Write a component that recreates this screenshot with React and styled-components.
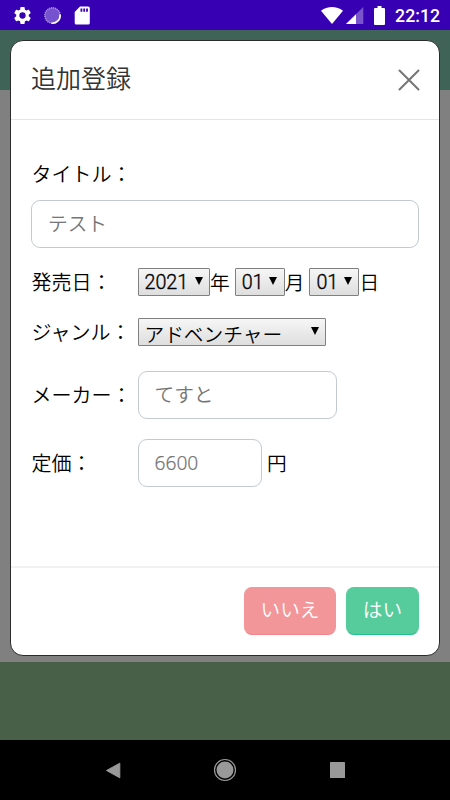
import React from "react";
import styled, { createGlobalStyle } from "styled-components";

const GlobalStyle = createGlobalStyle`
  * {
    box-sizing: border-box;
  }

  body {
    margin: 0;
    font-family: "Noto Sans CJK JP", sans-serif;
    font-weight: 350;
    font-size: 19.7px;
    color: #000;
  }

  input,
  select,
  button {
    margin: 0;
    font-family: inherit;
    font-weight: inherit;
    font-size: inherit;
  }
`;

const Screen = styled.div`
  position: relative;
  display: flex;
  flex-direction: column;
  width: 450px;
  height: 800px;
  overflow: hidden;
  background-color: #808080;
`;

const StatusBar = styled.div`
  display: flex;
  align-items: center;
  justify-content: space-between;
  height: 30px;
  padding: 0 10px 0 12px;
  background-color: #3700b3;
`;

const StatusGroup = styled.div`
  display: flex;
  align-items: center;
`;

const StatusIcon = styled.svg`
  display: block;
  width: ${(props) => props.$w}px;
  height: ${(props) => props.$h}px;
  margin-right: ${(props) => props.$gap || 0}px;
`;

const Clock = styled.span`
  padding-top: 2px;
  font-family: Roboto, sans-serif;
  font-weight: 500;
  font-size: 17.7px;
  line-height: 28px;
  color: #fff;
`;

const PageHeader = styled.div`
  height: 60px;
  background-color: #3f6457;
`;

const PageBody = styled.div`
  flex: 1;
`;

const PageFooter = styled.div`
  height: 78px;
  background-color: #486048;
`;

const NavBar = styled.div`
  display: grid;
  grid-template-columns: repeat(3, 112.5px);
  justify-content: center;
  align-items: center;
  justify-items: center;
  height: 60px;
  background-color: #000;
`;

const Modal = styled.div`
  position: absolute;
  top: 40px;
  left: 10px;
  display: flex;
  flex-direction: column;
  width: 430px;
  height: 616px;
  border: 1px solid #2b2b2b;
  border-radius: 13px;
  background-color: #fff;
`;

const ModalHeader = styled.div`
  display: flex;
  justify-content: space-between;
  align-items: center;
  height: 79px;
  padding: 0 19px 0 20px;
  border-bottom: 1px solid #e6e6e6;
`;

const Title = styled.h5`
  margin: 0;
  padding-bottom: 6px;
  font-weight: 350;
  font-size: 25px;
  line-height: 36px;
  color: #333;
`;

const Close = styled.button`
  display: flex;
  padding: 0;
  border: none;
  background: transparent;
`;

const ModalBody = styled.div`
  flex: 1;
  padding: 36px 20px 0;
`;

const ModalFooter = styled.div`
  display: flex;
  justify-content: flex-end;
  gap: 10px;
  height: 89px;
  padding: 19px 20px 0;
  border-top: 2px solid #f1f1f1;
`;

const Row = styled.div`
  display: flex;
  align-items: center;
  height: ${(props) => props.$h}px;
  margin-top: ${(props) => props.$mt || 0}px;
`;

const Label = styled.label`
  flex: none;
  width: 106.5px;
  padding: 0 0 1px 0.5px;
  font-size: 20px;
  line-height: 29px;
  white-space: nowrap;
`;

const Unit = styled.span`
  line-height: 30px;
  margin: 0 ${(props) => props.$mr || 0}px 0 ${(props) => props.$ml || 0}px;
`;

const Input = styled.input`
  width: ${(props) => props.$w};
  height: 48px;
  padding: 0 16px 1px;
  border: 1px solid #c3cad2;
  border-radius: 9px;
  background-color: #fff;
  font-family: "Noto Sans", "Noto Sans CJK JP", sans-serif;
  outline: none;

  &::placeholder {
    color: #757575;
    opacity: 1;
  }
`;

const PriceInput = styled(Input)`
  padding-bottom: 2px;
  font-size: 19.2px;
  -webkit-text-stroke: 0.2px #757575;
`;

const SelectBox = styled.div`
  position: relative;
  flex: none;
  width: ${(props) => props.$w}px;
  height: 28px;
`;

const SelectField = styled.select`
  display: block;
  appearance: none;
  width: 100%;
  height: 28px;
  padding: ${(props) => (props.$kana ? "8px 0 0 6px" : "2px 0 0 6px")};
  border: 1px solid #808080;
  border-radius: 1px;
  background: linear-gradient(#f6f6f6, #dedede);
  font-family: Roboto, "Noto Sans CJK JP", sans-serif;
  font-weight: 350;
  line-height: ${(props) => (props.$kana ? 18 : 24)}px;
  color: #000;
  -webkit-text-stroke: ${(props) => (props.$kana ? 0 : 0.35)}px #000;
`;

const Arrow = styled.svg`
  position: absolute;
  top: 9px;
  right: 7.5px;
  width: 8px;
  height: 8px;
  pointer-events: none;
`;

const Btn = styled.button`
  width: ${(props) => props.$w}px;
  height: 48px;
  padding: 0 0 6px;
  border: 1px solid ${(props) => props.$bg};
  border-bottom-color: ${(props) => props.$edge};
  border-radius: 8px;
  background-color: ${(props) => props.$bg};
  color: #fff;
`;

const Select = ({ width, value, kana }) => (
  <SelectBox $w={width}>
    <SelectField $kana={kana} defaultValue={value}>
      <option>{value}</option>
    </SelectField>
    <Arrow viewBox="0 0 8 8">
      <path d="M0 0h8L4 8z" />
    </Arrow>
  </SelectBox>
);

const SystemBar = () => (
  <StatusBar>
    <StatusGroup>
      <StatusIcon $w={21} $h={21} $gap={10} viewBox="0 0 24 24" fill="#fff">
        <path d="M19.14 12.94c.04-.3.06-.61.06-.94s-.02-.64-.07-.94l2.03-1.58a.49.49 0 0 0 .12-.61l-1.92-3.32a.49.49 0 0 0-.59-.22l-2.39.96a7 7 0 0 0-1.62-.94l-.36-2.54A.48.48 0 0 0 13.92 2.4h-3.84a.47.47 0 0 0-.47.41l-.36 2.54c-.59.24-1.13.57-1.62.94l-2.39-.96a.48.48 0 0 0-.59.22L2.74 8.87a.47.47 0 0 0 .12.61l2.03 1.58c-.05.3-.09.63-.09.94s.02.64.07.94l-2.03 1.58a.49.49 0 0 0-.12.61l1.92 3.32c.12.22.37.29.59.22l2.39-.96c.5.38 1.03.7 1.62.94l.36 2.54c.05.24.24.41.48.41h3.84c.24 0 .44-.17.47-.41l.36-2.54c.59-.24 1.13-.56 1.62-.94l2.39.96c.22.08.47 0 .59-.22l1.92-3.32a.47.47 0 0 0-.12-.61zM12 15.6a3.6 3.6 0 1 1 0-7.2 3.6 3.6 0 0 1 0 7.2z" />
      </StatusIcon>
      <StatusIcon $w={19} $h={19} $gap={12} viewBox="0 0 19 19" fill="none">
        <circle cx="9.5" cy="9.5" r="8" fill="#7652ce" />
        <circle
          cx="9.5"
          cy="9.5"
          r="7.6"
          stroke="#a58cdf"
          strokeWidth="1.6"
          strokeDasharray="1.2 0.8"
        />
        <path
          d="M17.1 8.5A7.8 7.8 0 0 1 8.5 17.2"
          stroke="#fff"
          strokeWidth="1.6"
        />
      </StatusIcon>
      <StatusIcon $w={16} $h={19} viewBox="0 0 16 19">
        <path
          d="M6 .5h8.2A1.6 1.6 0 0 1 15.8 2v15a1.6 1.6 0 0 1-1.6 1.6H2.3A1.6 1.6 0 0 1 .7 17V6z"
          fill="#fff"
        />
        <path
          d="M6.5 2.5h1.8v3.3H6.5zM9.3 2.5h1.8v3.3H9.3zM12.1 2.5h1.8v3.3h-1.8z"
          fill="#3700b3"
        />
      </StatusIcon>
    </StatusGroup>
    <StatusGroup>
      <StatusIcon $w={22} $h={17} $gap={3} viewBox="0 0 22 17">
        <path d="M0 3.7C6.5-1.1 15.5-1.1 22 3.7L11 17z" fill="#fff" />
      </StatusIcon>
      <StatusIcon $w={18} $h={17} $gap={10} viewBox="0 0 18 17">
        <path d="M17.3 0v17H0z" fill="#7a54cd" />
        <path d="M10 7.2V17H0z" fill="#fff" />
      </StatusIcon>
      <StatusIcon $w={11} $h={19} $gap={10} viewBox="0 0 11 19">
        <path
          d="M3.5 0h4v1.9H10a1 1 0 0 1 1 1V18a1 1 0 0 1-1 1H1a1 1 0 0 1-1-1V2.9a1 1 0 0 1 1-1h2.5z"
          fill="#fff"
        />
      </StatusIcon>
      <Clock>22:12</Clock>
    </StatusGroup>
  </StatusBar>
);

const Navigation = () => (
  <NavBar>
    <StatusIcon $w={16} $h={17} viewBox="0 0 16 17">
      <path
        d="M14.8 1.2v14.6L1.5 8.5z"
        fill="#999"
        stroke="#999"
        strokeLinejoin="round"
      />
    </StatusIcon>
    <StatusIcon $w={24} $h={24} viewBox="0 0 24 24" fill="none">
      <circle cx="12" cy="12" r="10.5" stroke="#999" strokeWidth="1.2" />
      <circle cx="12" cy="12" r="8.5" fill="#999" />
    </StatusIcon>
    <StatusIcon $w={15} $h={16} viewBox="0 0 15 16">
      <rect width="15" height="16" rx="0.6" fill="#999" />
    </StatusIcon>
  </NavBar>
);

const App = () => {
  return (
    <>
      <GlobalStyle />
      <Screen>
        <SystemBar />
        <PageHeader />
        <PageBody />
        <PageFooter />
        <Navigation />

        <Modal role="dialog">
          <ModalHeader>
            <Title>追加登録</Title>
            <Close aria-label="Close">
              <svg width="22" height="22" viewBox="0 0 22 22">
                <path
                  d="M1.5 1.5l19 19M20.5 1.5l-19 19"
                  stroke="#757575"
                  strokeWidth="2"
                  strokeLinecap="round"
                />
              </svg>
            </Close>
          </ModalHeader>

          <ModalBody>
            <Row $h={36}>
              <Label>タイトル：</Label>
            </Row>
            <Row $h={48} $mt={8}>
              <Input $w="100%" placeholder="テスト" />
            </Row>
            <Row $h={30} $mt={19}>
              <Label>発売日：</Label>
              <Select width={72.5} value="2021" />
              <Unit $mr={5}>年</Unit>
              <Select width={50} value="01" />
              <Unit $mr={5}>月</Unit>
              <Select width={50} value="01" />
              <Unit>日</Unit>
            </Row>
            <Row $h={30} $mt={20}>
              <Label>ジャンル：</Label>
              <Select width={188.5} value="アドベンチャー" kana />
            </Row>
            <Row $h={48} $mt={24}>
              <Label>メーカー：</Label>
              <Input $w="199.5px" placeholder="てすと" />
            </Row>
            <Row $h={48} $mt={20}>
              <Label>定価：</Label>
              <PriceInput $w="124.5px" placeholder="6600" />
              <Unit $ml={5}>円</Unit>
            </Row>
          </ModalBody>

          <ModalFooter>
            <Btn $w={92} $bg="#f3969a" $edge="#f1858b">
              いいえ
            </Btn>
            <Btn $w={73} $bg="#56cc9d" $edge="#1fc08a">
              はい
            </Btn>
          </ModalFooter>
        </Modal>
      </Screen>
    </>
  );
};

export default App;
